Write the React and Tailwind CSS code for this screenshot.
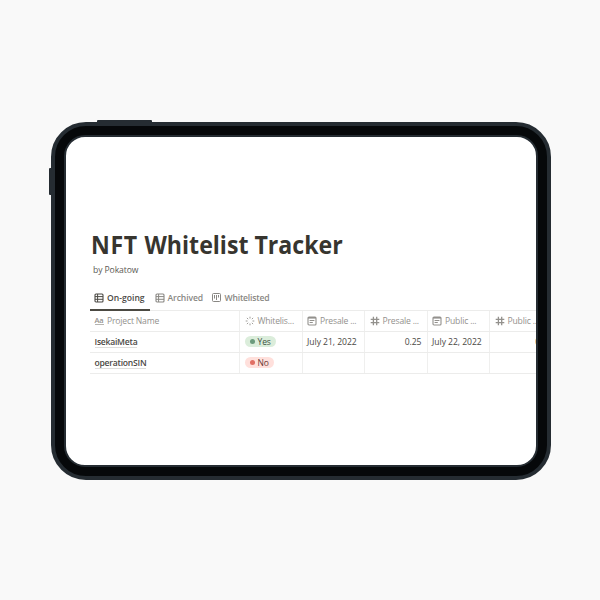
function TableIcon() {
  return (
    <svg viewBox="0 0 10 10" className="h-[10px] w-[10px] shrink-0" fill="none" stroke="currentColor">
      <rect x="1" y="1" width="8" height="8" rx="1" strokeWidth="1.1" />
      <path d="M1 3.6H9M1 6.3H9M3.6 1V9" strokeWidth="1" />
    </svg>
  );
}

function BoardIcon() {
  return (
    <svg viewBox="0 0 10 10" className="h-[10px] w-[10px] shrink-0" fill="none" stroke="currentColor">
      <rect x="0.5" y="0.5" width="8" height="8" rx="1" strokeWidth="1" />
      <path d="M2.5 2V5.5M4.5 2V7M6.5 2V4.5" strokeWidth="1" />
    </svg>
  );
}

function StatusIcon() {
  return (
    <svg viewBox="0 0 10 10" className="h-[10px] w-[10px] shrink-0" stroke="currentColor" strokeWidth="0.9">
      <path d="M5 .7V2.5M5 7.5V9.3M.7 5H2.5M7.5 5H9.3M1.9 1.9L3.2 3.2M6.8 6.8L8.1 8.1M1.9 8.1L3.2 6.8M6.8 3.2L8.1 1.9" />
    </svg>
  );
}

function DateIcon() {
  return (
    <svg viewBox="0 0 10 10" className="h-[10px] w-[10px] shrink-0" fill="none" stroke="currentColor">
      <rect x="1" y="1" width="8" height="8" rx="1" strokeWidth="1.1" />
      <path d="M1 1.8H9" strokeWidth="1.6" />
      <path d="M2.6 4.5H7.4M2.6 6.5H5.8" strokeWidth="1" />
    </svg>
  );
}

function NumberIcon() {
  return (
    <svg viewBox="0 0 10 10" className="h-[10px] w-[10px] shrink-0" fill="none" stroke="currentColor" strokeWidth="1.3">
      <path d="M3.4 .8V9.2M6.7 .8V9.2M.7 3.4H9.3M.7 6.6H9.3" />
    </svg>
  );
}

function TitleIcon() {
  return (
    <span className="w-[9.5px] shrink-0 border-b border-[#b5b4b1] text-[7.5px] leading-[7px] font-semibold tracking-[-0.3px]">
      Aa
    </span>
  );
}

const columns = [
  { icon: TitleIcon, label: "Project Name" },
  { icon: StatusIcon, label: "Whitelis..." },
  { icon: DateIcon, label: "Presale ..." },
  { icon: NumberIcon, label: "Presale ..." },
  { icon: DateIcon, label: "Public ..." },
  { icon: NumberIcon, label: "Public ..." },
];

const rows = [
  { name: "IsekaiMeta", ok: true, presale: "July 21, 2022", price: "0.25", pub: "July 22, 2022", pubPrice: "0.25" },
  { name: "operationSIN", ok: false },
];

const grid = "grid grid-cols-[150px_62.5px_62.5px_62.5px_62.5px_68px]";
const cell = "flex items-center border-r border-[#efefee] pr-[5px] pl-[4.5px] whitespace-nowrap";

function Tag({ ok }) {
  return (
    <span
      className={
        "ml-[0.5px] flex h-[11px] items-center gap-[3px] rounded-full pr-[5.5px] pl-[4.5px] text-[8.5px] leading-[11px] tracking-[-0.1px] " +
        (ok ? "bg-[#dbeddb] text-[#3d5144]" : "bg-[#ffe0dc] text-[#6b3a36]")
      }
    >
      <span className={"h-[5px] w-[5px] rounded-full " + (ok ? "bg-[#6c9b7d]" : "bg-[#e16f64]")} />
      {ok ? "Yes" : "No"}
    </span>
  );
}

export default function App() {
  return (
    <div className="h-[600px] w-[600px] overflow-hidden bg-[#f9f9f9] pt-[122px] pl-[51px] font-['Open_Sans','Noto_Sans',sans-serif]">
      <div className="relative h-[358px] w-[500px]">
        <div className="absolute top-[-2px] left-[46px] h-[5px] w-[55px] rounded-t-[1px] bg-[#252c32]" />
        <div className="absolute top-[46px] left-[-2px] h-[27px] w-[5px] rounded-l-[1px] bg-[#252c32]" />
        <div className="relative h-full w-full rounded-[35px] border-4 border-[#252c32] bg-[#06080a] p-[9px]">
          <div className="h-full w-full overflow-hidden rounded-[21px] border-2 border-[#252c32] bg-white">
            <div className="pt-[90px] pl-[24px]">
              <h1 className="ml-[0.8px] w-max origin-left scale-x-[0.925] text-[25px] leading-[34px] font-bold whitespace-nowrap text-[#37352f]">
                <span className="tracking-[0.7px]">NFT </span>Whitelist Tracker
              </h1>
              <p className="pt-[3px] pl-[3px] text-[8.6px] leading-[12px] tracking-[-0.1px] text-[#5c5a55]">by Pokatow</p>
              <div className="mt-[10px] flex h-[25px] w-[480px] border-b border-[#ececeb] text-[8.6px] font-semibold tracking-[-0.12px] whitespace-nowrap text-[#898783]">
                <div className="mb-[-1px] flex w-[60px] items-center gap-[3px] border-b-2 border-[#4b4942] pt-px pl-[4px] tracking-[0px] text-[#4b4944]">
                  <TableIcon />
                  On-going
                </div>
                <div className="flex w-[57px] items-center gap-[3px] pl-[4.5px]">
                  <TableIcon />
                  Archived
                </div>
                <div className="flex items-center gap-[3px] pl-[4.5px] tracking-[-0.2px]">
                  <BoardIcon />
                  Whitelisted
                </div>
              </div>
              <div className={grid + " h-[21px] w-[468px] border-b border-[#ececeb] text-[8.6px] tracking-[-0.18px] text-[#93918d]"}>
                {columns.map(({ icon: Icon, label }, i) => (
                  <div key={i} className={cell + " gap-[3px]"}>
                    <Icon />
                    {label}
                  </div>
                ))}
              </div>
              {rows.map((r) => (
                <div key={r.name} className={grid + " h-[20.75px] w-[468px] border-b border-[#ececeb] text-[8.6px] tracking-[-0.04px] text-[#4b4944]"}>
                  <div className={cell + " pt-px"}>
                    <span className="border-b border-[#dededc] leading-[10px] font-semibold tracking-[-0.24px]">{r.name}</span>
                  </div>
                  <div className={cell}>
                    <Tag ok={r.ok} />
                  </div>
                  <div className={cell + " pt-px"}>{r.presale}</div>
                  <div className={cell + " justify-end pt-px"}>{r.price}</div>
                  <div className={cell + " pt-px"}>{r.pub}</div>
                  <div className={cell + " justify-end pt-px"}>{r.pubPrice}</div>
                </div>
              ))}
            </div>
          </div>
        </div>
      </div>
    </div>
  );
}
